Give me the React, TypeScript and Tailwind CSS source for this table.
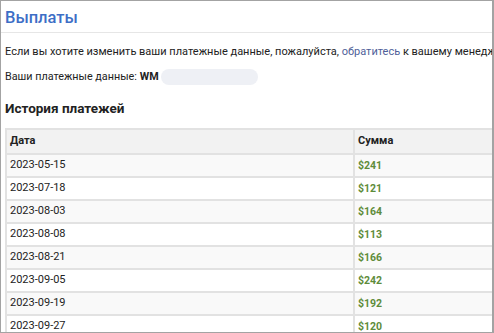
const payments = [
  { date: "2023-05-15", sum: "$241" },
  { date: "2023-07-18", sum: "$121" },
  { date: "2023-08-03", sum: "$164" },
  { date: "2023-08-08", sum: "$113" },
  { date: "2023-08-21", sum: "$166" },
  { date: "2023-09-05", sum: "$242" },
  { date: "2023-09-19", sum: "$192" },
  { date: "2023-09-27", sum: "$120" },
];

export default function App() {
  return (
    <div className="w-[494px] h-[333px] overflow-hidden bg-white border border-r-2 border-[#a3a3a3] font-['Roboto',sans-serif] text-[#222]">
      <div className="pl-[4px]">
        <h1 className="pt-[7px] pb-[4px] text-[16.5px] leading-[20px] font-medium text-[#3d6ec6] border-b border-[#e6e6e6] -ml-[4px] pl-[4px]">
          Выплаты
        </h1>

        <p className="mt-[11px] text-[11px] leading-[16px] whitespace-nowrap">
          Если вы хотите изменить ваши платежные данные, пожалуйста,{" "}
          <span className="text-[#4f5f99]">обратитесь</span> к вашему менеджеру
        </p>

        <div className="mt-[9px] flex items-center text-[10.8px] leading-[16px]">
          <span>Ваши платежные данные:</span>
          <span className="ml-[3px] font-bold">WM</span>
          <span className="ml-[2px] w-[97px] h-[16px] rounded-full bg-[#eef0f5]" />
        </div>

        <h2 className="mt-[14px] text-[13.5px] leading-[18px] font-bold">История платежей</h2>

        <table className="mt-[11px] w-[640px] border-collapse text-[11px]">
          <thead>
            <tr className="bg-[#f2f2f2]">
              <th className="w-[348px] h-[25px] px-[3px] text-left font-bold border-2 border-[#e2e2e2]">Дата</th>
              <th className="h-[25px] px-[3px] text-left font-bold border-2 border-[#e2e2e2]">Сумма</th>
            </tr>
          </thead>
          <tbody>
            {payments.map((p, i) => (
              <tr key={p.date} className={i % 2 === 0 ? "bg-[#f9f9f9]" : "bg-white"}>
                <td className="h-[23px] px-[3px] border-2 border-[#e2e2e2]">{p.date}</td>
                <td className="h-[23px] px-[3px] border-2 border-[#e2e2e2] font-bold text-[10.5px] text-[#5e8c3a]">
                  {p.sum}
                </td>
              </tr>
            ))}
          </tbody>
        </table>
      </div>
    </div>
  );
}
